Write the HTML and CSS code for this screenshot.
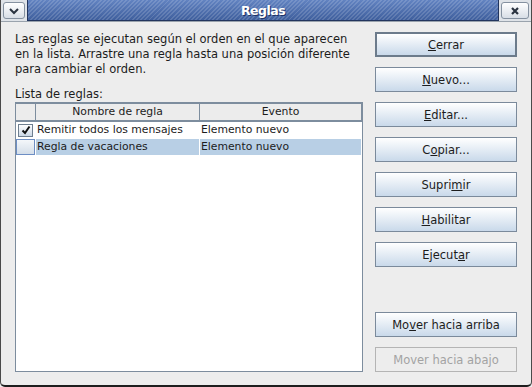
FILE: index.html
```html
<!DOCTYPE html>
<html lang="es">

<head>
    <meta charset="UTF-8">
    <title>Reglas</title>
    <link rel="stylesheet" href="styles.css">
</head>

<body>
    <div class="window">
        <div class="titlebar">
            <div class="tb-btn tb-left">
                <svg width="12" height="8" viewBox="0 0 12 8"><path d="M2 2 L6 6 L10 2" fill="none" stroke="#2a3340" stroke-width="2"/></svg>
            </div>
            <div class="tb-title">Reglas</div>
            <div class="tb-btn tb-right">
                <svg width="10" height="10" viewBox="0 0 10 10"><path d="M2 2 L8 8 M8 2 L2 8" fill="none" stroke="#2a3340" stroke-width="2.2"/></svg>
            </div>
        </div>

        <div class="content">
            <div class="left-col">
                <p class="desc">Las reglas se ejecutan según el orden en el que aparecen en la lista. Arrastre una regla hasta una posición diferente para cambiar el orden.</p>
                <div class="list-label">Lista de reglas:</div>
                <div class="rules-table">
                    <div class="table-header">
                        <div class="th th-check"></div>
                        <div class="th">Nombre de regla</div>
                        <div class="th">Evento</div>
                    </div>
                    <div class="table-row">
                        <div class="td td-check">
                            <span class="checkbox">
                                <svg width="10" height="10" viewBox="0 0 10 10"><path d="M1.5 5.5 L4 8 L8.5 1.5" fill="none" stroke="#111" stroke-width="2"/></svg>
                            </span>
                        </div>
                        <div class="td">Remitir todos los mensajes</div>
                        <div class="td">Elemento nuevo</div>
                    </div>
                    <div class="table-row selected">
                        <div class="td td-check">
                            <span class="checkbox focused"></span>
                        </div>
                        <div class="td">Regla de vacaciones</div>
                        <div class="td">Elemento nuevo</div>
                    </div>
                </div>
            </div>

            <div class="right-col">
                <button class="btn default"><u>C</u>errar</button>
                <button class="btn"><u>N</u>uevo...</button>
                <button class="btn"><u>E</u>ditar...</button>
                <button class="btn">C<u>o</u>piar...</button>
                <button class="btn">Supri<u>m</u>ir</button>
                <button class="btn"><u>H</u>abilitar</button>
                <button class="btn">Ejecut<u>a</u>r</button>
                <button class="btn move-up">Mo<u>v</u>er hacia arriba</button>
                <button class="btn" disabled>Mover hacia aba<u>j</u>o</button>
            </div>
        </div>
    </div>
</body>

</html>
```

FILE: styles.css
```css
* {
    margin: 0;
    padding: 0;
    box-sizing: border-box;
}

body {
    width: 532px;
    height: 387px;
    background-color: #ededed;
    font-family: "DejaVu Sans", sans-serif;
    font-size: 11.5px;
    color: #1c1c1c;
    overflow: hidden;
}

.window {
    width: 532px;
    height: 387px;
    display: flex;
    flex-direction: column;
    background-color: #ededed;
    border-left: 1px solid #4a4a4a;
    border-right: 1px solid #4a4a4a;
    border-bottom: 2px solid #1e1e1e;
    border-bottom-left-radius: 5px;
    border-bottom-right-radius: 5px;
}

/* title bar */
.titlebar {
    height: 22px;
    flex-shrink: 0;
    display: flex;
    align-items: stretch;
    background-color: #dfe3e8;
    border-bottom: 1px solid #9aa3ad;
}

.tb-btn {
    display: flex;
    justify-content: center;
    align-items: center;
    margin: 2px;
    border: 1px solid #8591a0;
    border-radius: 3px;
    background: linear-gradient(#ffffff, #d8dee6);
}

.tb-left {
    width: 22px;
}

.tb-right {
    width: 28px;
}

.tb-title {
    flex: 1;
    display: flex;
    justify-content: center;
    align-items: center;
    color: #ffffff;
    font-weight: bold;
    font-size: 12.5px;
    letter-spacing: -0.5px;
    text-shadow: 1px 1px 0 #1f3366;
    border: 1px solid #22355e;
    border-top: none;
    background:
        repeating-linear-gradient(135deg, rgba(255, 255, 255, 0.14) 0 1.4px, transparent 1.4px 3px),
        linear-gradient(#6283c1, #3f5f9d);
}

/* body */
.content {
    flex: 1;
    display: flex;
    gap: 12px;
    padding: 10px 14px 13px 14px;
}

.left-col {
    width: 348px;
    display: flex;
    flex-direction: column;
}

.desc {
    line-height: 15px;
}

.list-label {
    margin-top: 10px;
    line-height: 15px;
}

.rules-table {
    flex: 1;
    background-color: #ffffff;
    border: 1px solid #7d8d9e;
    font-size: 10.8px;
}

.table-header,
.table-row {
    display: grid;
    grid-template-columns: 20px 164px 1fr;
}

.table-header {
    height: 19px;
    background-color: #ececec;
    border-top: 1px solid #7d8d9e;
    border-bottom: 2px solid #7d8d9e;
}

.th {
    text-align: center;
    line-height: 16px;
    border-right: 1px solid #7d8d9e;
}

.table-row {
    height: 17px;
    border-bottom: 1px solid #ffffff;
}

.td {
    line-height: 16px;
    padding-left: 1px;
    white-space: nowrap;
    border-right: 1px solid #ffffff;
}

.selected .td {
    background-color: #b8cfe5;
}

.selected .td-check {
    background-color: transparent;
}

.td-check {
    display: flex;
    justify-content: center;
    align-items: center;
    padding-left: 0;
}

.checkbox {
    width: 15px;
    height: 13px;
    display: flex;
    justify-content: center;
    align-items: center;
    border: 1px solid #6f7f90;
    background: linear-gradient(#ffffff, #ccd8e6);
}

.checkbox.focused {
    width: 20px;
    height: 16px;
    border: 1px solid #6d8ec4;
    background: linear-gradient(#f4f7fa, #d4dee9);
}

/* buttons */
.right-col {
    width: 142px;
    display: flex;
    flex-direction: column;
    gap: 10px;
}

.btn {
    height: 25px;
    flex-shrink: 0;
    font-family: "DejaVu Sans", sans-serif;
    font-size: 11.5px;
    color: #1c1c1c;
    border: 1px solid #7b8a9b;
    background: linear-gradient(#ffffff, #c9d9ea);
}

.btn.default {
    border: 2px solid #6c7b8b;
}

.btn.move-up {
    margin-top: auto;
}

.btn:disabled {
    color: #a3a3a3;
    border-color: #b4b4b4;
    background: #ededed;
}
```
